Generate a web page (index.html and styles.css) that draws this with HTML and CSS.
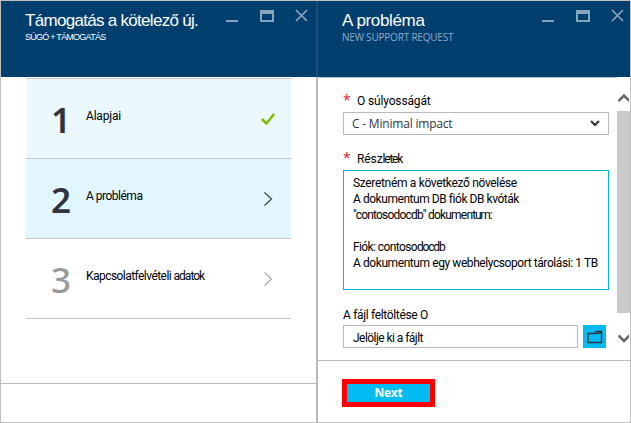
FILE: index.html
```html
<!DOCTYPE html>
<html lang="hu">
<head>
<meta charset="utf-8">
<title>Támogatás</title>
<link rel="stylesheet" href="styles.css">
</head>
<body>
<main class="frame">
  <section class="blade blade-steps">
    <header class="head">
      <div class="titles">
        <h1 class="t-left">Támogatás a kötelező új.</h1>
        <p class="s-left">SÚGÓ + TÁMOGATÁS</p>
      </div>
      <svg class="controls" width="82" height="14" viewBox="0 0 82 14">
        <path d="M0 11h12v2H0z"/><path fill-rule="evenodd" d="M34 1h14v12H34zM36 5v6h10V5z"/>
        <path class="cross" d="M70 1l11 11M81 1l-11 11"/>
      </svg>
    </header>
    <ol class="steps">
      <li class="step done"><b class="num">1</b><span class="label l1">Alapjai</span>
        <svg class="mark" width="14" height="12" viewBox="0 0 14 12"><path class="tick" d="M1 6l4.500 4.500L13 1"/></svg></li>
      <li class="step current"><b class="num">2</b><span class="label l2">A probléma</span>
        <svg class="mark" width="14" height="14" viewBox="0 0 14 14"><path class="chev" d="M3.500 .5L10.500 7l-7 6.500"/></svg></li>
      <li class="step todo"><b class="num">3</b><span class="label l3">Kapcsolatfelvételi <span class="tight">adatok</span></span>
        <svg class="mark" width="14" height="14" viewBox="0 0 14 14"><path class="chev" d="M3.500 .5L10.500 7l-7 6.500"/></svg></li>
    </ol>
    <footer class="foot-left"></footer>
  </section>
  <section class="blade blade-form">
    <header class="head">
      <div class="titles">
        <h1 class="t-right">A probléma</h1>
        <p class="s-right">NEW SUPPORT REQUEST</p>
      </div>
      <svg class="controls" width="82" height="14" viewBox="0 0 82 14">
        <path d="M0 11h12v2H0z"/><path fill-rule="evenodd" d="M34 1h14v12H34zM36 5v6h10V5z"/>
        <path class="cross" d="M70 1l11 11M81 1l-11 11"/>
      </svg>
    </header>
    <div class="body">
      <div class="form">
        <div class="cap"><i class="req">*</i><span class="c1">O súlyosságát</span></div>
        <div class="box select"><span>C - Minimal impact</span>
          <svg width="10" height="7" viewBox="0 0 10 7"><path d="M1 1l4 4 4-4"/></svg></div>
        <div class="cap cap2"><i class="req">*</i><span class="c2">Rész<span class="tight">letek</span></span></div>
        <div class="area">
          <p class="a1">Szeretném a következő növelése</p>
          <p class="a2">A dokumentum DB fiók DB kvóták</p>
          <p class="a3">"contosodocdb" dokumen<span class="tight">tum:</span></p>
          <p>&nbsp;</p>
          <p class="a4">Fiók: contoso<span class="tight">docdb</span></p>
          <p class="a5">A dokumentum egy webhelycsoport tárolási: 1 TB</p>
        </div>
        <div class="cap cap3"><span class="c3">A fájl feltöltése O</span></div>
        <div class="upload">
          <div class="box file"><span>Jelölje ki a fájlt</span></div>
          <div class="browse"><svg width="16" height="14" viewBox="0 0 16 14"><path d="M1 3.500h7l1.500-2H14.500v11H1z"/><path d="M8 3h6.500"/></svg></div>
        </div>
      </div>
      <div class="scroll">
        <svg class="up" width="11" height="9" viewBox="0 0 11 9"><path d="M.5 8L6 2.500 11.500 8"/></svg>
        <div class="thumb"></div>
        <svg class="down" width="11" height="9" viewBox="0 0 11 9"><path d="M.5 1.500L6 7l5.500-5.500"/></svg>
      </div>
    </div>
    <footer class="foot-right"><div class="next">Next</div></footer>
  </section>
</main>
</body>
</html>
```

FILE: styles.css
```css
* { box-sizing: border-box; margin: 0; padding: 0; }
body { width: 631px; height: 423px; overflow: hidden; background: #fff; font: 12px/16px Roboto, "Liberation Sans", sans-serif; color: #000; }
svg { display: block; flex: none; overflow: hidden; }
p, h1, span { white-space: nowrap; }
.frame { display: flex; width: 631px; height: 423px; border: 1px solid #bfbfbf; }
.blade { display: flex; flex-direction: column; height: 421px; }
.blade-steps { width: 315px; }
.blade-form { width: 314px; border-left: 2px solid #bababa; }
.head { display: flex; justify-content: space-between; flex: none; height: 76px; background: #003e6e; color: #fff; }
.blade-form .head { margin-left: -2px; border-left: 2px solid #1c4f7c; }
.titles { padding: 9px 0 0 24px; }
h1 { font: 400 17px/21px "Liberation Sans", sans-serif; }
.t-left { letter-spacing: -0.7px; }
.t-right { letter-spacing: -0.35px; }
.s-left { font: 9px/12px "Liberation Sans", sans-serif; letter-spacing: -0.75px; }
.s-right { font: 500 10px/12px "Open Sans", sans-serif; letter-spacing: -0.2px; color: #8fadc8; }
.controls { margin: 8px 8px 0 0; fill: #88a5bf; }
.blade-form .controls { margin-right: 6px; }
.cross { fill: none; stroke: #88a5bf; stroke-width: 1.7; }
.steps { list-style: none; margin: 1px 25px 0; border-top: 1px solid #c4c4c4; }
.step { display: flex; align-items: center; height: 80px; padding: 0 16px 0 25px; border-bottom: 1px solid #c8c8c8; }
.done { background: #ebf9ff; }
.current { background: #e1f6fe; }
.num { width: 35px; font: 600 35px/40px "Noto Sans", sans-serif; color: #30343f; padding-top: 2px; }
.todo .num { font-weight: 500; color: #999; }
.label { flex: 1; padding-bottom: 6px; }
.l1 { letter-spacing: -0.2px; }
.l2 { letter-spacing: -0.5px; }
.l3 { letter-spacing: -0.55px; }
.tight { letter-spacing: -1px; }
.tick { fill: none; stroke: #7fba00; stroke-width: 2.5; }
.chev { fill: none; stroke: #30414f; stroke-width: 1.2; }
.todo .chev { stroke: #aaa; }
.foot-left { height: 39px; margin-top: auto; border-top: 1px solid #bababa; }
.body { display: flex; flex: none; height: 283px; }
.form { width: 299px; padding: 0 9px 0 25px; border-top: 1px solid #b4bcc4; }
.cap { display: flex; height: 34px; padding-top: 15px; }
.req { width: 14px; margin-top: -4px; font: normal 400 14px/22px "Open Sans", sans-serif; color: #e81123; }
.c1 { letter-spacing: -0.15px; }
.box { display: flex; align-items: center; height: 23px; border: 1px solid #bababa; padding-left: 8px; }
.select { width: 266px; justify-content: space-between; padding-right: 8px; font: 12px/16px "Open Sans", sans-serif; letter-spacing: -0.2px; color: #30343f; }
.select path { fill: none; stroke: #30343f; stroke-width: 2.2; }
.cap2 { height: 35px; padding-top: 16px; }
.c2 { letter-spacing: -0.1px; }
.c2 .tight { letter-spacing: -1.2px; }
.area { width: 266px; height: 120px; padding: 4px 0 0 9px; border: 1px solid #00b4e6; }
.a1 { letter-spacing: -0.33px; }
.a2 { letter-spacing: -0.45px; }
.a3 { letter-spacing: -0.8px; }
.a4 { letter-spacing: -0.6px; }
.a3 .tight, .a4 .tight { letter-spacing: -1.2px; }
.a5 { letter-spacing: -0.42px; }
.cap3 { height: 35px; padding-top: 17px; }
.c3 { letter-spacing: -0.33px; }
.upload { display: flex; gap: 5px; }
.file { width: 235px; padding-top: 2px; padding-left: 9px; letter-spacing: -0.55px; }
.browse { display: flex; align-items: center; justify-content: center; width: 23px; height: 23px; background: #00bcf2; }
.browse path { fill: none; stroke: #30343f; stroke-width: 1.5; }
.scroll { display: flex; flex-direction: column; width: 13px; padding-top: 16px; }
.scroll svg { margin-left: 1px; }
.scroll path { fill: none; stroke: #686868; stroke-width: 2.5; }
.thumb { width: 13px; height: 202px; margin-top: 9px; background: #cacaca; }
.down { margin-top: 21px; }
.foot-right { height: 62px; border-top: 1px solid #bababa; padding: 18px 0 0 24px; }
.next { width: 93px; height: 28px; border: 5px solid #f00; background: #00bcf2; color: #fff; font: 700 12px/18px "Open Sans", sans-serif; letter-spacing: -0.2px; text-align: center; }
```
